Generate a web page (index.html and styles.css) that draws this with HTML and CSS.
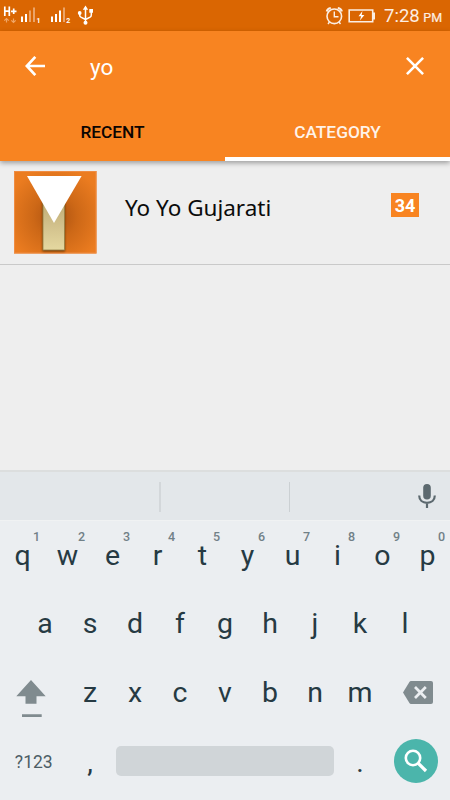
FILE: index.html
```
<!DOCTYPE html>
<html lang="en">
<head>
<meta charset="utf-8">
<title>Search</title>
<link rel="stylesheet" href="styles.css">
</head>
<body>
<header class="status">
  <svg class="status-left" width="100" height="31" viewBox="0 0 100 31" fill="none">
    <path d="M4.800 6.500v9.500M9.300 6.500v9.500M4.800 11.200h4.500M11 11.300h5.500M13.700 8.500v5.500" stroke="#fff" stroke-width="1.700"/>
    <path d="M6.500 18.500v4M4.300 20.600l2.200-2.100 2.200 2.100M13.500 18.500v4M11.300 20.400l2.200 2.100 2.200-2.100" stroke="#f0a667" stroke-width="1.200"/>
    <path d="M22 16.500v5.500M26 14v8" stroke="#fff" stroke-width="2"/>
    <path d="M30 10.500v11.500M34 7.500v14.500" stroke="#eba468" stroke-width="2"/>
    <path d="M52 16.500v5.500M56 14v8M60 10.500v11.500" stroke="#fff" stroke-width="2"/>
    <path d="M64 7.500v14.500" stroke="#eba468" stroke-width="2"/>
    <path d="M85.500 8v15M79.700 13v2q0 1.500 1.200 2.200l4.600 2.300M91.300 12v3q0 1.500-1.200 2.200l-4.600 2.300" stroke="#fff" stroke-width="1.500"/>
    <path d="M85.500 5.500l2.700 4.200h-5.400zM89.300 9h3.700v3.700h-3.700z" fill="#fff"/>
    <circle cx="79.700" cy="13" r="1.900" fill="#fff"/><circle cx="85.500" cy="22.800" r="2" fill="#fff"/>
    <text class="sim" x="36.600" y="22.500">1</text><text class="sim" x="66.300" y="22.500">2</text>
  </svg>
  <svg class="status-right" width="54" height="31" viewBox="324 0 54 31" fill="none" stroke="#fbeee4">
    <circle cx="334.300" cy="16.300" r="7.300" stroke-width="1.600"/>
    <path d="M334.300 11.500v5.300h4.200M329.500 22l-1.500 2M339 22l1.500 2" stroke-width="1.400"/>
    <path d="M326.800 11.500q.5-3 4-3.500M341.800 11.500q-.5-3-4-3.500" stroke-width="2.200"/>
    <path d="M349.200 10h23.500v11.800h-23.500z" stroke-width="1.600"/>
    <path d="M374 12.500v7" stroke-width="2"/>
    <path d="M362.500 11l-4 5.200h2.600l-1.200 4.300 4.500-5.500h-2.800z" fill="#fff" stroke="none"/>
  </svg>
  <span class="clock">7:28 <small>PM</small></span>
</header>
<section class="appbar">
  <div class="search">
    <svg width="20" height="20" viewBox="0 0 20 20" fill="none" stroke="#fff" stroke-width="2.700"><path d="M20 10H2M10.300 .9L1.800 10l8.500 9.100"/></svg>
    <span class="query">yo</span>
    <svg width="18" height="18" viewBox="0 0 18 18" fill="none" stroke="#fff" stroke-width="2.600"><path d="M.9 .9l16.200 16.200M17.100 .9L.9 17.100"/></svg>
  </div>
  <nav class="tabs">
    <div class="tab">RECENT</div>
    <div class="tab active">CATEGORY</div>
  </nav>
</section>
<main class="results">
  <div class="result">
    <svg class="thumb" width="83" height="83" viewBox="0 0 83 83">
      <defs>
        <radialGradient id="bg" cx=".5" cy=".55" r=".6"><stop offset="0" stop-color="#a95010"/><stop offset=".45" stop-color="#cd6817"/><stop offset="1" stop-color="#eb7c20"/></radialGradient>
        <linearGradient id="stem" x1="0" y1="0" x2="0" y2="1"><stop offset="0" stop-color="#bda970"/><stop offset=".5" stop-color="#d1c08b"/><stop offset="1" stop-color="#e5d8a0"/></linearGradient>
        <filter id="soft" x="-50%" y="-50%" width="200%" height="200%"><feGaussianBlur stdDeviation="1.300"/></filter>
      </defs>
      <rect width="82.500" height="82.500" fill="url(#bg)"/>
      <rect x=".5" y=".5" width="81.500" height="81.500" fill="none" stroke="#ef8c42"/>
      <rect x="28.500" y="30" width="22.500" height="50.500" fill="#713b09" filter="url(#soft)"/>
      <rect x="29" y="28" width="21.500" height="51" fill="url(#stem)" stroke="#938048" stroke-width=".8"/>
      <path d="M13 5h54.600L40 52z" fill="#fff"/>
    </svg>
    <span class="name">Yo Yo Gujarati</span>
    <span class="count">34</span>
  </div>
</main>
<section class="suggestions">
  <i></i><i></i>
  <svg width="18" height="25" viewBox="0 0 18 25"><rect x="5.200" y="0" width="7.600" height="15.500" rx="3.800" fill="#5c696f"/><path d="M1.200 11.500c0 4.700 3.500 7.300 7.800 7.300s7.800-2.600 7.800-7.300M9 19v5" fill="none" stroke="#5c696f" stroke-width="2.200"/></svg>
</section>
<section class="keyboard">
  <div class="keys">
    <span>q<sup>1</sup></span><span>w<sup>2</sup></span><span>e<sup>3</sup></span><span>r<sup>4</sup></span><span>t<sup>5</sup></span><span>y<sup>6</sup></span><span>u<sup>7</sup></span><span>i<sup>8</sup></span><span>o<sup>9</sup></span><span>p<sup>0</sup></span>
  </div>
  <div class="keys home">
    <span>a</span><span>s</span><span>d</span><span>f</span><span>g</span><span>h</span><span>j</span><span>k</span><span>l</span>
  </div>
  <div class="keys lower">
    <svg class="shift" width="30" height="38" viewBox="0 0 30 38" fill="#808b8f"><path d="M15 0l14.700 16.200h-9.200v7.600h-11v-7.600H.3zM6 34.200h19.700v2.700H6z"/></svg>
    <span>z</span><span>x</span><span>c</span><span>v</span><span>b</span><span>n</span><span>m</span>
    <svg class="erase" width="30" height="23" viewBox="0 0 30 23"><path d="M8 0h20q2 0 2 2v19q0 2-2 2H8q-1 0-1.600-.9L0 11.500 6.400.9Q7 0 8 0z" fill="#808b8f"/><path d="M12 6l10.800 11M22.800 6L12 17" stroke="#ebeef1" stroke-width="2.700"/></svg>
  </div>
  <div class="keys bottom">
    <span class="symbols">?123</span><span class="punct">,</span>
    <div class="space"></div>
    <span class="punct">.</span>
    <div class="go"><svg width="24" height="24" viewBox="0 0 24 24" fill="none" stroke="#fff"><circle cx="9" cy="9" r="7.200" stroke-width="2.600"/><path d="M14 14l8 8" stroke-width="3.200"/></svg></div>
  </div>
</section>
</body>
</html>
```
FILE: styles.css
```
* { box-sizing: border-box; }
body {
  margin: 0;
  width: 450px;
  height: 800px;
  overflow: hidden;
  display: flex;
  flex-direction: column;
  background: #eee;
  font-family: Roboto, sans-serif;
}
svg { display: block; flex: none; }
.status {
  height: 31px;
  flex: none;
  display: flex;
  align-items: center;
  background: #da6602;
  color: #fdeee2;
}
.sim { font: bold 7px Roboto, sans-serif; fill: #fff; }
.status-right { margin-left: 224px; }
.clock {
  margin-left: 6px;
  font-size: 18.500px;
  line-height: 31px;
  white-space: nowrap;
  padding-top: 3px;
}
.clock small { font-size: 12.500px; margin-left: -1px; -webkit-text-stroke: .2px; }
.appbar {
  height: 130px;
  flex: none;
  display: flex;
  flex-direction: column;
  background: #f88421;
  box-shadow: 0 2px 5px rgba(0, 0, 0, .35);
  z-index: 1;
}
.search {
  height: 70px;
  flex: none;
  display: flex;
  align-items: center;
  padding: 0 26px 0 25px;
}
.query {
  flex: 1;
  padding: 1px 0 0 45px;
  color: #fff;
  font-size: 22.500px;
}
.tabs { flex: 1; display: flex; }
.tab {
  flex: 1;
  height: 60px;
  line-height: 63px;
  text-align: center;
  font-size: 17.300px;
  font-weight: 500;
  color: #0b0502;
}
.tab.active { color: #fff3e9; border-bottom: 4px solid #fff; }
.results { height: 309px; flex: none; }
.result {
  height: 104px;
  display: flex;
  align-items: flex-start;
  padding: 10px 31px 0 13.500px;
  border-bottom: 1px solid #c9c9c9;
}
.name {
  flex: 1;
  margin: 20px 0 0 28.500px;
  font: 22.500px/34px "Noto Sans", sans-serif;
  color: #0b0b0b;
}
.count {
  width: 28px;
  height: 24px;
  margin-top: 21.500px;
  text-align: center;
  font: bold 18px/25px Roboto, sans-serif;
  background: #f88421;
  color: #fff;
}
.suggestions {
  height: 52px;
  flex: none;
  display: flex;
  align-items: center;
  background: #e3e7ea;
  border-top: 2px solid #dcdede;
  border-bottom: 2px solid #f0f2f3;
  padding: 1px 0 0 159px;
}
.suggestions i { width: 1px; height: 30px; background: #cbd0d3; }
.suggestions i:first-child { width: 2px; background: #d3d7da; }
.suggestions i + i { margin-left: 128px; }
.suggestions svg { margin-left: 128px; }
.keyboard { flex: 1; margin-top: -1px; background: #ebeef1; color: #263a43; }
.keys { height: 68.600px; display: flex; align-items: center; }
.keys > span {
  flex: none;
  width: 45px;
  position: relative;
  padding-top: 1px;
  text-align: center;
  font-size: 28.500px;
  line-height: 34px;
}
.keys sup {
  position: absolute;
  left: 31px;
  top: -9px;
  width: 11px;
  font-size: 12.500px;
  line-height: 16px;
  font-weight: 500;
  color: #718087;
}
.home { padding-left: 22.500px; }
.shift { margin: 13px 21.500px 0 16px; }
.erase { margin-left: 20px; }
.keys .symbols {
  width: 67.500px;
  font-size: 17.500px;
  color: #4c5d65;
}
.keys .punct { padding-top: 3px; }
.space {
  width: 218px;
  height: 30px;
  margin: 0 3.500px;
  border-radius: 5px;
  background: #d0d5d8;
}
.go {
  width: 44.500px;
  height: 44.500px;
  margin-left: 11px;
  border-radius: 50%;
  display: grid;
  place-items: center;
  background: #4bb5ab;
}
```
